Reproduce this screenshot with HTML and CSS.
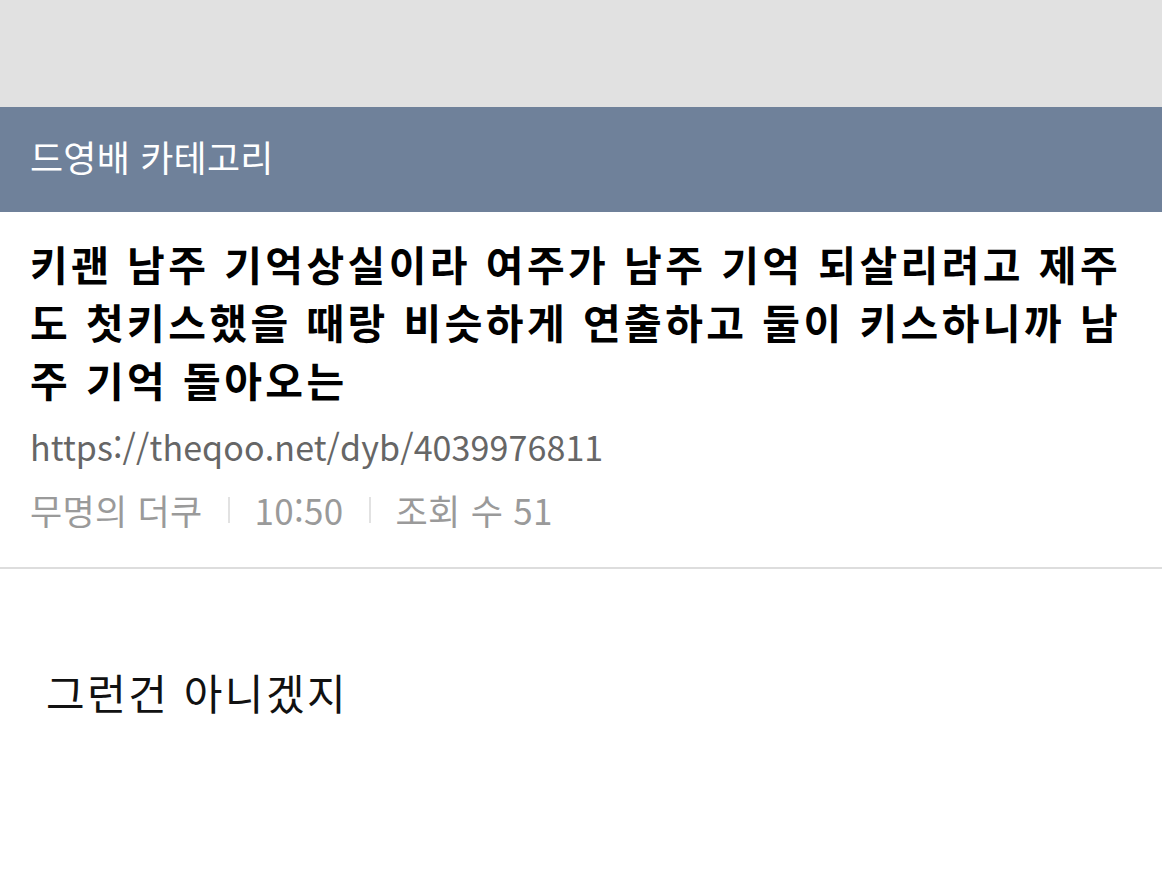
FILE: index.html
```html
<!DOCTYPE html>
<html lang="ko">
<head>
    <meta charset="UTF-8">
    <meta name="viewport" content="width=device-width, initial-scale=1.0">
    <title>드영배 카테고리</title>
    <link rel="stylesheet" href="styles.css">
</head>
<body>
    <div class="top-band"></div>

    <div class="cat-header">드영배 카테고리</div>

    <div class="article-head">
        <h1 class="article-title">키괜 남주 기억상실이라 여주가 남주 기억 되살리려고 제주도 첫키스했을 때랑 비슷하게 연출하고 둘이 키스하니까 남주 기억 돌아오는</h1>
        <div class="article-url">https://theqoo.net/dyb/4039976811</div>
        <div class="article-meta">
            <span>무명의 더쿠</span>
            <span class="sep"></span>
            <span>10:50</span>
            <span class="sep"></span>
            <span>조회 수 51</span>
        </div>
    </div>

    <div class="article-body">
        <p>그런건 아니겠지</p>
    </div>
</body>
</html>
```

FILE: styles.css
```css
body {
    margin: 0;
    background-color: #ffffff;
    font-family: 'Noto Sans CJK KR', 'Noto Sans', sans-serif;
    color: #111111;
}

.top-band {
    height: 107px;
    background-color: #e1e1e1;
}

.cat-header {
    box-sizing: border-box;
    height: 105px;
    display: flex;
    align-items: center;
    padding: 0 0 8px 30px;
    background-color: #6f819a;
    color: #ffffff;
    font-size: 36px;
    letter-spacing: 0.2px;
}

.article-head {
    padding: 22px 20px 32px 30px;
    border-bottom: 2px solid #dddddd;
}

.article-title {
    margin: 0;
    font-size: 41px;
    font-weight: 700;
    line-height: 58px;
    color: #000000;
    letter-spacing: 3.4px;
    word-break: break-all;
}

.article-url {
    margin-top: 14px;
    font-size: 34px;
    line-height: 50px;
    color: #666666;
    letter-spacing: 0.1px;
}

.article-meta {
    margin-top: 13px;
    display: flex;
    align-items: center;
    font-size: 35px;
    line-height: 50px;
    color: #9a9a9a;
    letter-spacing: 0.3px;
}

    .article-meta .sep {
        display: inline-block;
        width: 2px;
        height: 26px;
        margin: 0 25px;
        background-color: #e2e2e2;
    }

.article-body {
    padding: 98px 46px 0 46px;
}

    .article-body p {
        margin: 0;
        font-size: 42px;
        line-height: 50px;
        color: #111111;
        letter-spacing: 2.5px;
    }
```
